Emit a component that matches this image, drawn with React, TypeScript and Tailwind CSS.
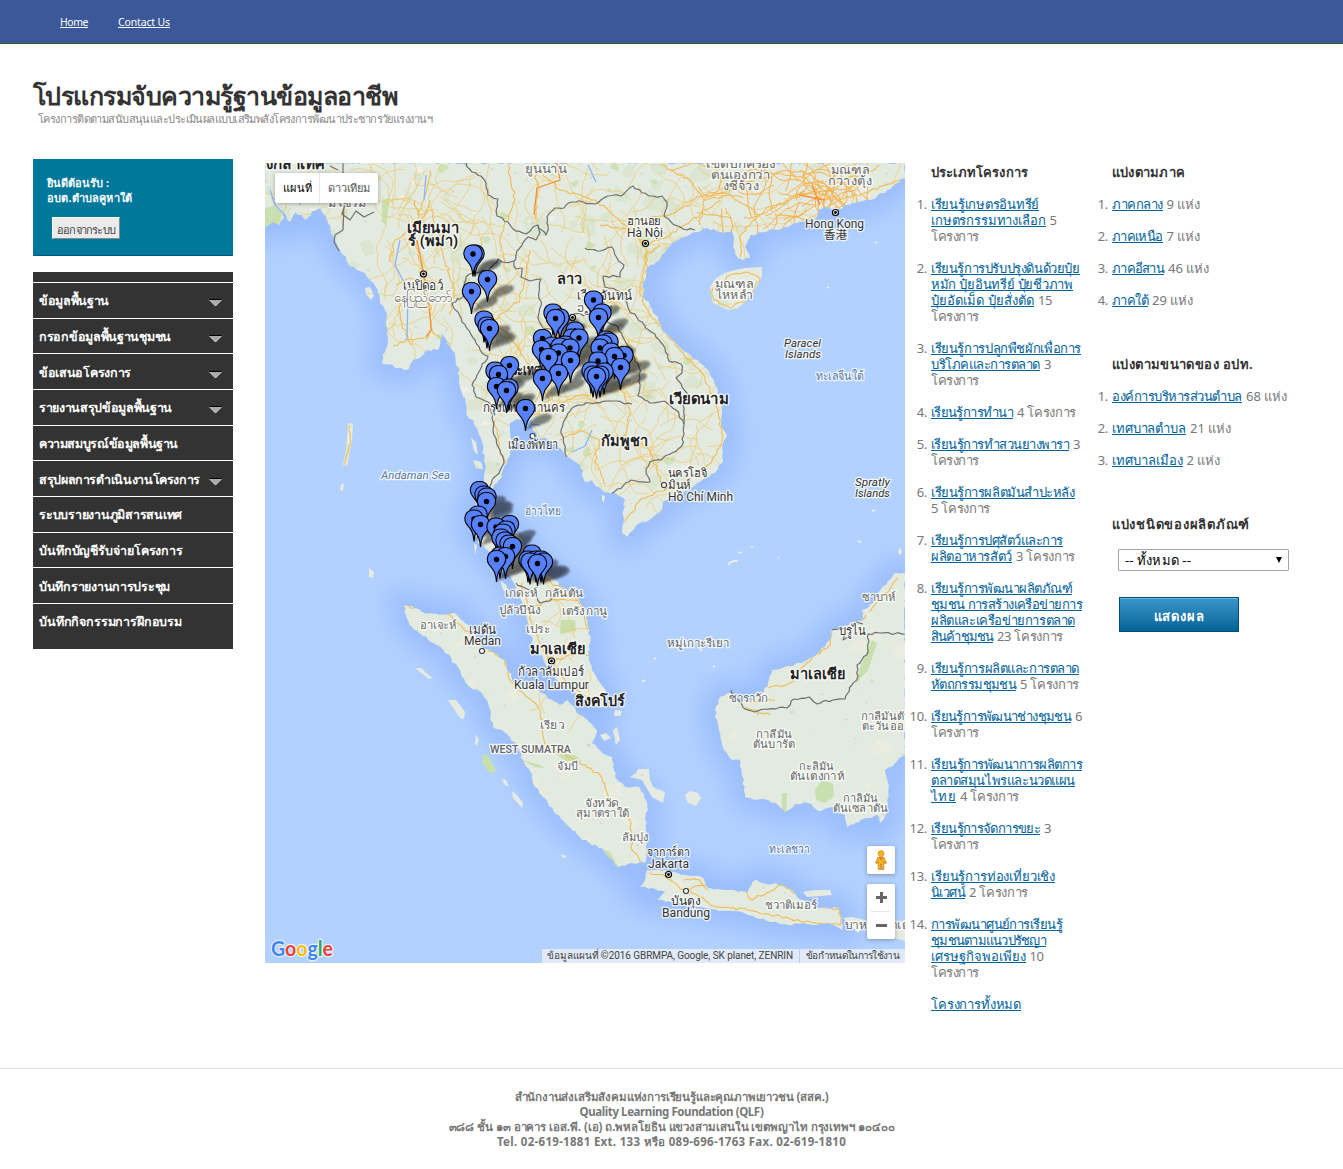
import { useLayoutEffect, useRef, useState, type ReactNode } from "react";

const FONT = "font-['Noto_Sans','DejaVu_Sans',sans-serif]";

/* Text whose letter spacing is adjusted so that it fills the given width. */
function Fit({ w, className = "", children }: { w: number; className?: string; children: ReactNode }) {
  const ref = useRef<HTMLSpanElement>(null);
  const [spacing, setSpacing] = useState(0);
  useLayoutEffect(() => {
    const el = ref.current;
    if (!el) return;
    const measure = (px: number) => {
      el.style.letterSpacing = px + "px";
      return el.getBoundingClientRect().width;
    };
    const base = measure(0);
    const slope = measure(1) - base;
    const value = slope > 0 ? (w - base) / slope : 0;
    el.style.letterSpacing = value + "px";
    setSpacing(value);
  }, [w]);
  return (
    <span ref={ref} className={"inline-block whitespace-nowrap " + className} style={{ letterSpacing: spacing }}>
      {children}
    </span>
  );
}

type Line = { a?: string; aw?: number; t?: string; tw?: number };
const K: Line = { t: "โครงการ", tw: 48 };

const projects: Line[][] = [
  [{ a: "เรียนรู้เกษตรอินทรีย์", aw: 108 }, { a: "เกษตรกรรมทางเลือก", aw: 114.5, t: "5", tw: 7 }, K],
  [
    { a: "เรียนรู้การปรับปรุงดินด้วยปุ๋ย", aw: 148.5 },
    { a: "หมัก ปุ๋ยอินทรีย์ ปุ๋ยชีวภาพ", aw: 142 },
    { a: "ปุ๋ยอัดเม็ด ปุ๋ยสั่งตัด", aw: 103, t: "15", tw: 14 },
    K,
  ],
  [{ a: "เรียนรู้การปลูกพืชผักเพื่อการ", aw: 150 }, { a: "บริโภคและการตลาด", aw: 109, t: "3", tw: 7 }, K],
  [{ a: "เรียนรู้การทำนา", aw: 82, t: "4 โครงการ", tw: 59 }],
  [{ a: "เรียนรู้การทำสวนยางพารา", aw: 138, t: "3", tw: 7 }, K],
  [{ a: "เรียนรู้การผลิตมันสำปะหลัง", aw: 143.5 }, { t: "5 โครงการ", tw: 59 }],
  [{ a: "เรียนรู้การปศุสัตว์และการ", aw: 131.5 }, { a: "ผลิตอาหารสัตว์", aw: 81, t: "3 โครงการ", tw: 59 }],
  [
    { a: "เรียนรู้การพัฒนาผลิตภัณฑ์", aw: 141 },
    { a: "ชุมชน การสร้างเครือข่ายการ", aw: 151 },
    { a: "ผลิตและเครือข่ายการตลาด", aw: 144 },
    { a: "สินค้าชุมชน", aw: 62, t: "23 โครงการ", tw: 66 },
  ],
  [{ a: "เรียนรู้การผลิตและการตลาด", aw: 148 }, { a: "หัตถกรรมชุมชน", aw: 85, t: "5 โครงการ", tw: 59 }],
  [{ a: "เรียนรู้การพัฒนาช่างชุมชน", aw: 140, t: "6", tw: 7 }, K],
  [
    { a: "เรียนรู้การพัฒนาการผลิตการ", aw: 151 },
    { a: "ตลาดสมุนไพรและนวดแผน", aw: 144 },
    { a: "ไทย", aw: 25, t: "4 โครงการ", tw: 59 },
  ],
  [{ a: "เรียนรู้การจัดการขยะ", aw: 109, t: "3", tw: 7 }, K],
  [{ a: "เรียนรู้การท่องเที่ยวเชิง", aw: 124 }, { a: "นิเวศน์", aw: 34, t: "2 โครงการ", tw: 59 }],
  [
    { a: "การพัฒนาศูนย์การเรียนรู้", aw: 131 },
    { a: "ชุมชนตามแนวปรัชญา", aw: 115 },
    { a: "เศรษฐกิจพอเพียง", aw: 94.5, t: "10", tw: 14 },
    K,
  ],
];

const regions: Line[][] = [
  [{ a: "ภาคกลาง", aw: 50.5, t: "9 แห่ง", tw: 34 }],
  [{ a: "ภาคเหนือ", aw: 50.5, t: "7 แห่ง", tw: 34 }],
  [{ a: "ภาคอีสาน", aw: 52, t: "46 แห่ง", tw: 41 }],
  [{ a: "ภาคใต้", aw: 36, t: "29 แห่ง", tw: 41 }],
];

const sizes: Line[][] = [
  [{ a: "องค์การบริหารส่วนตำบล", aw: 130, t: "68 แห่ง", tw: 41 }],
  [{ a: "เทศบาลตำบล", aw: 74, t: "21 แห่ง", tw: 41 }],
  [{ a: "เทศบาลเมือง", aw: 70.5, t: "2 แห่ง", tw: 34 }],
];

const menu: [string, number, boolean][] = [
  ["ข้อมูลพื้นฐาน", 70, true],
  ["กรอกข้อมูลพื้นฐานชุมชน", 132, true],
  ["ข้อเสนอโครงการ", 92, true],
  ["รายงานสรุปข้อมูลพื้นฐาน", 133, true],
  ["ความสมบูรณ์ข้อมูลพื้นฐาน", 139, false],
  ["สรุปผลการดำเนินงานโครงการ", 161, true],
  ["ระบบรายงานภูมิสารสนเทศ", 143, false],
  ["บันทึกบัญชีรับจ่ายโครงการ", 144, false],
  ["บันทึกรายงานการประชุม", 131, false],
  ["บันทึกกิจกรรมการฝึกอบรม", 143, false],
];

function NumberedList({ items }: { items: Line[][] }) {
  return (
    <ol className="flex flex-col gap-4">
      {items.map((lines, i) => (
        <li key={i} className="flex">
          <span className="-ml-8 w-8 pr-[4px] text-right tracking-tight">{i + 1}.</span>
          <div>
            {lines.map((l, j) => (
              <div key={j} className="flex h-4 gap-1">
                {l.a && (
                  <a href="#" className="text-[#00629a]">
                    <Fit w={l.aw!} className="h-[15px] border-b border-[#00629a]">
                      {l.a}
                    </Fit>
                  </a>
                )}
                {l.t && <Fit w={l.tw!}>{l.t}</Fit>}
              </div>
            ))}
          </div>
        </li>
      ))}
    </ol>
  );
}

function Heading({ w, children }: { w: number; children: string }) {
  return (
    <h3 className="mb-4 h-4 font-bold text-[#333]">
      <Fit w={w}>{children}</Fit>
    </h3>
  );
}

const MAINLAND =
  "M265 163V227L272 222L280 225L285 213L290 222L296 212L306 220L312 211L320 208L328 223L335 240L341 252L348 263L357 270L365 273L371 281L378 293L380 303L387 313L386 325L388 337L385 352L382 363L394 367L407 370L412 362L420 358L428 350L438 350L442 332L447 344L452 350L458 367L459 380L462 393L466 405L468 417L474 424L478 430L483 450L485 463L484 475L482 487L479 497L475 507L472 520L474 536L482 545L490 553L498 563L505 573L512 580L520 597L524 608L527 620L532 643L545 663L555 677L564 686L575 693L590 706L604 707L606 696L600 683L592 670L589 656L590 643L588 627L585 610L577 598L565 590L552 577L540 571L532 563L527 553L522 543L519 534L513 530L502 528L495 520L492 507L492 492L497 483L502 477L507 460L512 443L510 430L510 423L522 418L532 420L533 430L537 437L548 440L558 447L567 457L580 465L585 482L592 480L602 490L612 493L625 500L623 515L622 533L627 537L635 527L652 518L662 510L663 502L680 494L695 485L707 477L715 473L722 463L722 447L727 435L721 425L722 413L718 390L714 380L708 370L698 360L688 353L674 341L662 330L658 317L652 309L645 300L643 283L648 267L656 262L665 252L672 243L685 237L696 232L708 228L720 232L732 232L735 250L738 258L743 260L750 258L745 247L750 235L768 231L785 227L800 222L815 220L818 210L828 207L835 210L852 203L870 200L885 193L895 184L905 178V163Z";
const SUMATRA =
  "M404 605L412 606L422 612L440 615L455 613L465 623L473 630L482 647L492 652L505 660L509 672L515 683L528 685L542 693L552 700L560 705L567 700L580 715L592 724L597 730L592 743L602 753L612 757L615 777L625 787L640 788L646 800L648 810L645 820L647 833L645 863L632 863L618 867L610 858L602 848L592 845L580 837L565 823L556 814L548 803L541 795L533 783L532 774L523 760L518 748L510 737L502 730L493 727L487 700L482 693L470 687L462 677L456 664L445 653L437 645L428 640L412 627L406 615Z";
const JAVA =
  "M647 870L665 870L685 875L702 877L708 888L725 890L748 892L752 883L757 880L766 884L775 883L792 890L797 897L803 900L818 908L838 908L842 918L842 930L828 923L816 925L802 923L788 925L772 922L756 918L742 912L722 911L702 907L680 903L658 900L665 892L652 888L640 887L645 880Z";
const BORNEO =
  "M905 573L895 573L888 581L878 593L874 602L865 610L863 620L855 622L842 627L832 630L830 640L825 647L815 656L802 663L787 666L772 670L770 676L768 683L764 692L752 700L738 702L733 694L728 693L718 700L715 717L722 743L724 750L732 760L740 760L745 797L755 800L768 800L776 803L785 812L795 804L808 803L818 811L832 807L845 815L847 827L868 818L878 815L880 823L887 810L888 783L885 770L895 763L905 755Z";
const ISLANDS =
  "M710 287L716 278L725 273L735 270L745 268L762 267L762 277L752 293L745 302L738 308L728 310L713 303ZM630 777L636 773L638 769L649 769L650 780L653 787L665 792L663 803L652 797L642 780ZM685 795L690 791L698 793L701 798L696 806L688 803ZM803 892L815 890L830 890L832 895L807 897ZM843 918L852 917L865 920L872 925L862 928L858 933ZM885 925L905 920V941L888 936ZM348 423L353 424L352 440L347 466L343 465L346 450ZM341 484L344 484L343 491L340 490ZM369 568L374 572L373 578L369 577ZM415 668L421 668L432 678L429 679ZM448 700L456 700L465 712L464 719L460 718ZM476 734L479 740L477 746L475 744ZM502 779L506 780L509 787L504 784ZM512 791L516 794L523 803L522 808L513 798ZM561 854L566 856L566 858L562 857ZM365 288L370 287L374 296L371 300L366 294ZM600 735L606 733L611 738L604 741ZM613 730L617 727L620 740L616 745ZM615 710L622 711L620 716L614 716ZM862 610L868 608L870 614L864 615ZM899 548L902 550L901 555L898 553ZM699 646L703 650L700 652ZM602 495L605 496L604 503L602 500ZM471 438L476 442L478 455L474 451ZM473 460L481 462L483 469L476 468ZM474 543L477 546L475 555ZM500 580L506 585L509 592L503 590Z";

const BORDERS = [
  "M343 163V174L352 176M338 170L330 166M344 205L343 230L335 235L334 242L339 251M345 205L342 214L350 220L356 211L364 217L374 212",
  "M466 163L472 172L481 176L486 183L488 195L498 199L497 216L508 222L513 229L526 234L531 230L538 225L540 233L536 240L528 237L519 249L514 261L502 262L498 259L489 270L473 273L466 277L463 297L452 303L462 322L475 340L482 353L488 356L480 370L472 385L476 397L488 402L493 415L493 430L497 445L504 463L499 473L492 480L488 500L483 518",
  "M538 225L546 235L548 226L547 217L555 208L564 208L572 202L583 202L595 204L608 196L621 196L633 186L642 193L653 196L662 196L667 202L664 216L671 222L683 229L695 230",
  "M514 261L516 269L522 268L521 277L530 281L541 279L539 292L541 306L538 318L543 328L556 331L568 321L574 314L587 315L600 320L618 327L624 339L633 354L639 367L640 378L638 396L650 403L664 401L676 410L684 424L682 446L672 453L661 460L650 462L646 473L650 482L631 480L612 493",
  "M567 457L564 444L561 430L567 416L572 408L590 403L610 401L632 404",
  "M585 248L597 251L612 247L617 258L624 265L620 277L603 276L605 287L616 290L625 296L629 310L642 322L656 337L665 348L669 361L681 364L682 373L676 378L687 393L683 405L684 424",
  "M516 583L525 588L535 595L540 603L550 601L557 592",
  "M731 690L738 700L745 709L755 712L765 709L787 708L794 699L809 697L817 704L833 700L845 699L852 685L858 676L857 665L868 652L868 634L880 633L905 634M832 630L845 629L843 640L850 636M856 622L863 624",
];

const ROADS = [
  "M413 225L416 245L422 265L425 290L430 305L432 330L426 340",
  "M415 200L418 215L432 210L440 240L445 262L455 290L450 315M430 200L420 225L395 240L390 262M430 170L425 195L415 225",
  "M396 285L410 278L440 282M398 295L402 325L412 345M425 338L400 342L393 346M432 330L450 345",
  "M500 325L520 350L550 400L522 418M470 300L495 320L520 300L530 250M555 317L560 350L548 380L528 410M575 330L600 360L620 380M522 418L540 410L580 395L615 392L640 380",
  "M495 420L500 450L508 465L500 485L497 510L510 535L525 560L545 580L565 590L580 605L588 630",
  "M522 583L530 615L538 640L551 662L565 680L588 697L603 700M551 662L570 655L590 655M530 610L550 600L578 600",
  "M560 440L580 430L600 440L625 435L650 450L665 490M625 435L630 410L620 385M600 440L595 462L605 485",
  "M625 522L640 500L665 490L690 480L712 462L722 440L718 410L705 378L680 350L650 315L640 295L645 255L660 245",
  "M645 245L620 220L595 200L560 190L540 170M645 245L670 235L700 215L720 200M645 245L630 230L600 225M645 245L648 280",
  "M704 200L730 195L760 215L790 200L815 190L830 200L860 195L900 180M704 200L690 180L660 165M704 200L700 225M760 215L740 235L740 257M815 190L800 170M815 190L860 175L880 165M815 190L790 175L750 170L704 200",
  "M506 270L500 240L515 200L508 165M535 163L537 190L536 220M400 605L450 615L480 645L505 660L510 680L540 710L545 745L575 760L600 775L610 800L631 823L632 850L643 866",
  "M650 873L665 876L684 890L705 885L745 891L752 900L780 885L800 895L825 908L840 910L840 925L800 921L770 915L747 910L710 905L690 890M684 880L700 880L708 890",
  "M898 578L880 600L862 620M832 632L830 645L805 665L790 683L768 688M775 700L752 702L740 700M770 715L745 708",
  "M712 290L730 275L748 272L760 278L748 300L730 308L714 300L712 290",
  "M350 425L350 445L345 465",
];

/* Small deterministic generator for secondary roads and terrain patches. */
function rng(seed: number) {
  let s = seed;
  return () => {
    s = (s * 16807) % 2147483647;
    return s / 2147483647;
  };
}

function walks(seed: number, n: number, x: number, y: number, w: number, h: number) {
  const r = rng(seed);
  let d = "";
  for (let i = 0; i < n; i++) {
    let px = x + r() * w;
    let py = y + r() * h;
    let dir = r() * 6.28;
    d += `M${px.toFixed(1)} ${py.toFixed(1)}`;
    const steps = 6 + Math.floor(r() * 9);
    for (let k = 0; k < steps; k++) {
      dir += (r() - 0.5) * 1.1;
      px += Math.cos(dir) * 5;
      py += Math.sin(dir) * 5;
      d += `L${px.toFixed(1)} ${py.toFixed(1)}`;
    }
  }
  return d;
}

function patches(seed: number, n: number, x: number, y: number, w: number, h: number, size: number) {
  const r = rng(seed);
  let d = "";
  for (let i = 0; i < n; i++) {
    const cx = x + r() * w;
    const cy = y + r() * h;
    const m = size * (0.4 + r());
    for (let k = 0; k < 7; k++) {
      const a = (k / 7) * 6.28;
      const q = m * (0.4 + r() * 0.8);
      d += `${k ? "L" : "M"}${(cx + Math.cos(a) * q * 1.2).toFixed(1)} ${(cy + Math.sin(a) * q).toFixed(1)}`;
    }
    d += "Z";
  }
  return d;
}

/* Gives a coastline or border a finer, jagged outline. */
function jag(path: string, amount: number) {
  const r = rng(97);
  return path
    .split("M")
    .filter(Boolean)
    .map((part) => {
      const closed = part.endsWith("Z");
      const pts = part
        .replace("Z", "")
        .split("L")
        .map((p) => p.split(" ").map(Number));
      if (closed) pts.push(pts[0]);
      let d = "";
      pts.forEach(([x, y], i) => {
        if (i) {
          const [px, py] = pts[i - 1];
          const n = Math.max(1, Math.round(Math.hypot(x - px, y - py) / 3.5));
          for (let k = 1; k < n; k++) {
            const t = k / n;
            d += `L${(px + (x - px) * t + (r() - 0.5) * amount).toFixed(1)} ${(py + (y - py) * t + (r() - 0.5) * amount).toFixed(1)}`;
          }
        }
        d += `${i ? "L" : "M"}${x} ${y}`;
      });
      return d + (closed ? "Z" : "");
    })
    .join("");
}

const FRAME = "M265 163L265 227L";
const mainland = jag(MAINLAND.replace("M265 163V227L", FRAME).replace("L905 178V163Z", "L905 178L905 163Z"), 3);
const sumatra = jag(SUMATRA, 2.5);
const java = jag(JAVA, 2);
const borneo = jag(BORNEO, 2.5);
const coast = mainland + sumatra + java + borneo;

const minorRoads =
  walks(11, 75, 265, 163, 640, 70) +
  walks(5, 60, 385, 200, 150, 140) +
  walks(9, 80, 480, 290, 160, 130) +
  walks(31, 40, 560, 200, 110, 100) +
  walks(21, 26, 640, 340, 90, 140) +
  walks(77, 30, 530, 410, 140, 110) +
  walks(3, 14, 520, 590, 70, 90);

const pins: [number, number][] = [
  [475, 254], [473, 254], [487.5, 279.5], [471.5, 291.5], [593.5, 300], [553, 313], [602, 313], [560, 318], [598.5, 317.5],
  [555.5, 318.5], [484, 320], [487, 326], [489.5, 328.5], [575, 331], [572, 338], [579, 338], [542.5, 338.5], [606, 340],
  [609, 342], [603, 344], [565, 345], [552, 346], [560, 347], [600, 348], [570, 348], [541.5, 349.5], [611, 352], [558.5, 353],
  [624, 355.5], [614.5, 356.5], [548.5, 357.5], [570.5, 360.5], [598, 361], [509.5, 365.5], [620.5, 367.5], [591, 371],
  [495, 371], [604, 372], [558.5, 373.5], [498.5, 374.5], [600, 375], [593, 375], [596.5, 376.5], [542.5, 378.5],
  [496.5, 386.5], [509, 388], [506.5, 390.5], [525.5, 408.5], [479.5, 490.5], [484, 495], [487, 497], [486.5, 501.5],
  [478, 515], [474, 519], [509.5, 524.5], [480.5, 524.5], [496, 527], [506, 530], [503, 533], [501, 538], [505, 541],
  [509, 544], [512.5, 546.5], [532, 554], [500, 556], [505.5, 556.5], [496.5, 559.5], [528, 560], [536, 560], [541, 560],
  [543.5, 562], [530, 562], [537.5, 563.5],
];

/* x, baseline y, width, size, kind, text */
type Kind = "country" | "city" | "region" | "sea" | "seaLatin" | "island";
const labels: [number, number, number, number, Kind, string][] = [
  [256, 169, 69, 15, "country", "บังกลาเทศ"],
  [328, 207, 38, 12, "region", "มิโซรัม"],
  [407, 233, 52, 14.5, "country", "เมียนมา"],
  [408, 246, 50, 14.5, "country", "ร์ (พม่า)"],
  [403, 290, 40, 13, "city", "เนปิดอว์"],
  [394, 302, 57, 12, "region", "နေပြည်တော်"],
  [525, 173, 42, 12, "region", "ยูนนาน"],
  [557, 284, 25, 14.5, "country", "ลาว"],
  [577, 300, 55, 13, "city", "เวียงจันทน์"],
  [577, 312, 35, 12, "region", "ວຽງຈັນ"],
  [627, 225, 34, 12, "city", "ฮานอย"],
  [627, 237, 36, 12.5, "city", "Hà Nội"],
  [706, 168, 70, 12, "region", "เขตปกครอง"],
  [711, 179, 60, 12, "region", "ตนเองกว่า"],
  [723, 190, 36, 12, "region", "งซีจ้วง"],
  [831, 174, 38, 12, "region", "มณฑล"],
  [828, 185, 44, 12, "region", "กวางตุ้ง"],
  [805, 228, 59, 12.5, "city", "Hong Kong"],
  [824, 239, 23, 11.5, "city", "香港"],
  [715, 288, 38, 12, "region", "มณฑล"],
  [716, 299, 37, 12, "region", "ไหหลำ"],
  [784, 347, 37, 11.5, "island", "Paracel"],
  [785, 358, 36, 11.5, "island", "Islands"],
  [816, 380, 48, 12, "sea", "ทะเลจีนใต้"],
  [505, 375, 54, 14.5, "country", "ประเทศไทย"],
  [483, 412, 82, 13, "city", "กรุงเทพมหานคร"],
  [508, 449, 50, 13, "city", "เมืองพัทยา"],
  [669, 404, 60, 14.5, "country", "เวียดนาม"],
  [601, 446, 47, 14.5, "country", "กัมพูชา"],
  [668, 477, 39, 12, "city", "นครโฮจิ"],
  [668, 489, 23, 12, "city", "มินห์"],
  [668, 501, 65, 12.5, "city", "Hồ Chí Minh"],
  [381, 479, 69, 11.5, "seaLatin", "Andaman Sea"],
  [525, 515, 36, 12, "sea", "อ่าวไทย"],
  [855, 486, 35, 11.5, "island", "Spratly"],
  [855, 497, 35, 11.5, "island", "Islands"],
  [505, 597, 33, 11.5, "region", "เกดะห์"],
  [545, 597, 38, 11.5, "region", "กลันตัน"],
  [499, 614, 42, 11.5, "region", "ปูลัวปีนัง"],
  [562, 615, 45, 11.5, "region", "เตรังกานู"],
  [420, 629, 37, 11.5, "region", "อาเจะห์"],
  [526, 633, 24, 11.5, "region", "เประ"],
  [469, 634, 27, 13, "city", "เมดัน"],
  [464, 645, 37, 12.5, "city", "Medan"],
  [530, 654, 55, 14.5, "country", "มาเลเซีย"],
  [518, 676, 66, 13, "city", "กัวลาลัมเปอร์"],
  [514, 689, 75, 12.5, "city", "Kuala Lumpur"],
  [575, 706, 50, 14.5, "country", "สิงคโปร์"],
  [540, 729, 24, 11.5, "region", "เรียว"],
  [490, 753, 81, 10.5, "region", "WEST SUMATRA"],
  [557, 770, 21, 11.5, "region", "จัมบี"],
  [585, 807, 34, 11, "region", "จังหวัด"],
  [576, 817, 53, 11, "region", "สุมาตราใต้"],
  [622, 841, 27, 11.5, "region", "ลัมปุง"],
  [647, 856, 43, 12.5, "city", "จาการ์ตา"],
  [648, 868, 41, 12.5, "city", "Jakarta"],
  [671, 905, 30, 12.5, "city", "บันดุง"],
  [662, 917, 48, 12.5, "city", "Bandung"],
  [765, 909, 52, 11.5, "region", "ชวาติเมอร์"],
  [845, 929, 64, 11.5, "region", "บาหลีนูซาเต"],
  [769, 853, 41, 12, "sea", "ทะเลชวา"],
  [667, 647, 62, 11.5, "region", "หมู่เกาะรีเยา"],
  [862, 601, 34, 11.5, "region", "ซาบาห์"],
  [839, 635, 27, 13, "city", "บรูไน"],
  [790, 679, 55, 14.5, "country", "มาเลเซีย"],
  [729, 702, 39, 11.5, "region", "ซาราวัก"],
  [861, 720, 51, 11, "region", "กาลีมันตัน"],
  [862, 730, 49, 11, "region", "ตะวันออก"],
  [756, 738, 36, 11, "region", "กาลีมัน"],
  [753, 748, 42, 11, "region", "ตันบารัต"],
  [799, 770, 35, 11, "region", "กะลิมัน"],
  [790, 780, 54, 11, "region", "ตันเตงกาห์"],
  [843, 802, 35, 11, "region", "กาลิมัน"],
  [833, 812, 55, 11, "region", "ตันเซลาตัน"],
];

const labelClass: Record<Kind, string> = {
  country: "fill-[#222] font-bold",
  city: "fill-[#333]",
  region: "fill-[#666] font-medium",
  sea: "fill-[#5579a8]",
  seaLatin: "fill-[#5579a8] italic",
  island: "fill-[#333] italic",
};

function MapCanvas() {
  return (
    <svg viewBox="265 163 640 800" className="block h-[800px] w-[640px] bg-[#b2d1ff] font-['Roboto','Noto_Sans','Noto_Sans_CJK_SC',sans-serif]">
      <defs>
        <filter id="deep" x="-10%" y="-10%" width="120%" height="120%">
          <feGaussianBlur stdDeviation="12" />
        </filter>
        <filter id="soft" x="-40%" y="-40%" width="180%" height="180%">
          <feGaussianBlur stdDeviation="1.2" />
        </filter>
        <clipPath id="landClip">
          <path d={coast + ISLANDS} />
        </clipPath>
        <g id="pin">
          <path
            d="M0 22.5C-.7 13.5-2.6 10.6-6 6.8C-11.8 .6-9.2-9 0-9S11.8 .6 6 6.8C2.6 10.6 .7 13.5 0 22.5Z"
            className="fill-[#5781fc] stroke-black"
            strokeWidth="1.1"
          />
          <circle r="2.7" />
        </g>
      </defs>
      <g filter="url(#deep)" className="fill-none stroke-[#8bb0fb]" strokeWidth="26" opacity=".65">
        <path d={MAINLAND + SUMATRA + JAVA + BORNEO} />
      </g>
      <path d={coast} className="fill-[#e3eadf]" />
      <path d={ISLANDS} className="fill-[#e6ebe1]" />
      <g clipPath="url(#landClip)">
        <path d={patches(8, 150, 265, 163, 640, 350, 9)} className="fill-[#dae5d2]" />
        <path d={patches(41, 60, 400, 590, 505, 340, 8)} className="fill-[#e9ecdf]" />
        <path d={patches(17, 110, 265, 163, 640, 350, 4)} className="fill-[#efeee8]" />
        <path d={patches(19, 60, 440, 163, 300, 350, 4)} className="fill-[#c8dfae]" opacity=".8" />
        <path d={patches(67, 420, 265, 163, 640, 780, 1.3)} className="fill-[#ced6ca]" opacity=".8" />
        <path
          d="M265 208L274 206L281 212L280 226H265ZM382 200L390 198L386 225L382 222ZM815 790L822 780L833 784L834 796L825 803L816 800ZM782 793L787 793L786 813L782 812ZM600 848L610 852L619 868L612 868ZM872 640L877 643L868 670L855 685L860 668ZM522 760L540 765L545 768L535 767ZM555 753L575 755L582 762L565 761ZM561 620L575 620L576 631L560 634Z"
          className="fill-[#c8dfae]"
        />
        <path d={minorRoads} className="fill-none stroke-[#efc96f]" strokeWidth=".9" opacity=".75" />
        <path d={walks(51, 34, 690, 163, 200, 60) + walks(52, 25, 800, 172, 35, 35)} className="fill-none stroke-[#f6b14d]" strokeWidth="1" />
        {ROADS.map((d, i) => (
          <path key={i} d={jag(d, 3)} className="fill-none stroke-[#f0bd55]" strokeWidth="1.1" />
        ))}
        <path d="M417 240L424 275L430 315L431 330L426 337M557 163L560 180L537 188L534 215M799 195L825 200M812 185L820 205" className="fill-none stroke-[#f5923a]" strokeWidth="1.3" />
        <path d="M270 190L275 205L285 215M297 180L300 205M426 175L424 200M400 240L395 265L408 290L407 340M588 165L596 182M540 425L525 424M572 452L585 446L592 430" className="fill-none stroke-[#8bb5fb]" strokeWidth="1.3" />
      </g>
      <path d="M482 755L488 755L494 766L496 772L490 773L483 765Z" className="fill-[#c8dfae]" />
      <g className="fill-none stroke-[#707070]" strokeWidth="1.2" strokeLinejoin="round">
        {BORDERS.map((d, i) => (
          <path key={i} d={i === 0 ? d : jag(d, 2.4)} />
        ))}
      </g>
      <path d="M728 565Q731 560 738 561M739 553L742 552M751 547L753 547M778 557L779 558M858 541L861 542M827 288L829 287M875 243L877 242M872 511L875 510M642 682L645 680M654 659L656 658M713 667L715 666" className="fill-none stroke-[#eef0ea]" strokeWidth="1.6" />
      {[[423.5, 274], [645.5, 243.5], [835.5, 212.5], [572.5, 317.5], [551.5, 661], [668.5, 874.5]].map(([x, y]) => (
        <g key={x}>
          <circle cx={x} cy={y} r="3" className="fill-white stroke-black" strokeWidth="1.2" />
          <circle cx={x} cy={y} r="1.4" />
        </g>
      ))}
      {[[664, 485], [532.5, 436], [482, 651], [686, 891]].map(([x, y]) => (
        <circle key={x} cx={x} cy={y} r="2.5" className="fill-white stroke-[#333]" strokeWidth="1.1" />
      ))}
      {labels.map(([x, y, w, size, kind, text], i) => (
        <text
          key={i}
          x={x}
          y={y}
          fontSize={size}
          textLength={w}
          lengthAdjust="spacingAndGlyphs"
          paintOrder="stroke"
          strokeWidth="2.6"
          strokeLinejoin="round"
          className={"stroke-white/80 " + labelClass[kind]}
        >
          {text}
        </text>
      ))}
      <g filter="url(#soft)" opacity=".6">
        {pins.map(([x, y], i) => (
          <path key={i} fillOpacity=".75" d={`M${x} ${y + 22}C${x + 5} ${y + 15} ${x + 6} ${y + 9} ${x + 15} ${y + 6.5}S${x + 30} ${y + 7} ${x + 24} ${y + 12}S${x + 8} ${y + 17} ${x} ${y + 22}Z`} />
        ))}
      </g>
      {pins.map(([x, y], i) => (
        <use key={i} href="#pin" x={x} y={y} />
      ))}
    </svg>
  );
}

function GoogleLogo() {
  return (
    <svg viewBox="0 0 68 30" className="h-[30px] w-[68px] font-['Lato',sans-serif]">
      <text
        x="3"
        y="20"
        fontSize="20"
        textLength="62"
        lengthAdjust="spacingAndGlyphs"
        paintOrder="stroke"
        strokeWidth="2.5"
        strokeLinejoin="round"
        className="stroke-white/70 font-bold"
      >
        <tspan className="fill-[#4285f4]">G</tspan>
        <tspan className="fill-[#ea4335]">o</tspan>
        <tspan className="fill-[#fbbc05]">o</tspan>
        <tspan className="fill-[#4285f4]">g</tspan>
        <tspan className="fill-[#34a853]">l</tspan>
        <tspan className="fill-[#ea4335]">e</tspan>
      </text>
    </svg>
  );
}

function MapPanel() {
  return (
    <div className="relative mt-[4px] ml-8 h-[800px] w-[640px] shrink-0 overflow-hidden">
      <MapCanvas />
      <div className="absolute top-[10px] left-[10px] flex h-[30px] w-[103px] items-center rounded-[2px] bg-white text-[11px] shadow-[0_1px_4px_rgba(0,0,0,0.3)]">
        <div className="flex h-full w-[45px] items-center border-r border-[#e6e6e6] pl-2 font-medium text-black">
          <Fit w={29}>แผนที่</Fit>
        </div>
        <div className="pl-2 text-[#565656]">
          <Fit w={42}>ดาวเทียม</Fit>
        </div>
      </div>
      <div className="absolute right-[10px] bottom-[89px] flex size-7 items-center justify-center rounded-[2px] bg-white shadow-[0_1px_4px_rgba(0,0,0,0.3)]">
        <svg viewBox="0 0 12 20" className="h-5 w-3">
          <path d="M3 7.2H9L11.4 13L10 13.7L8.8 11.6V19.4H6.4V14H5.6V19.4H3.2V11.6L2 13.7L.6 13Z" fill="#fbb41b" stroke="#b8792d" strokeWidth=".7" />
          <path d="M3.6 7.4H8.4L6 10.2Z" fill="#e5771e" />
          <circle cx="6" cy="3.6" r="3" fill="#fbb41b" stroke="#c98a1c" strokeWidth=".6" />
        </svg>
      </div>
      <div className="absolute right-[10px] bottom-[24px] flex h-[55px] w-7 flex-col items-center rounded-[2px] bg-white shadow-[0_1px_4px_rgba(0,0,0,0.3)]">
        <svg viewBox="0 0 28 55" className="h-[55px] w-7">
          <path d="M9 13.5H20M14.5 8V19M9 41.5H20" stroke="#666" strokeWidth="3" />
          <path d="M4 27.5H23" stroke="#e6e6e6" />
        </svg>
      </div>
      <div className="absolute bottom-[-3px] left-[3px]">
        <GoogleLogo />
      </div>
      <div className="absolute right-0 bottom-0 flex h-[14px] w-[363px] items-center bg-[#f5f5f5]/70 pl-[5px] font-['Roboto','Noto_Sans',sans-serif] text-[10px] leading-[14px] text-[#444]">
        <Fit w={246}>ข้อมูลแผนที่ ©2016 GBRMPA, Google, SK planet, ZENRIN</Fit>
        <span className="mx-[6px] h-full w-px bg-[#b2d1ff]" />
        <Fit w={93}>ข้อกำหนดในการใช้งาน</Fit>
      </div>
    </div>
  );
}

export default function App() {
  return (
    <div className={"flex h-[1169px] w-[1343px] flex-col overflow-hidden bg-white text-[13px] leading-4 text-[#777] " + FONT}>
      <nav className="flex h-11 shrink-0 items-center gap-[30px] border-b border-[#2f5b2a] bg-[#3b5998] pl-[60px] text-[10.5px] text-white">
        <a href="#">
          <Fit w={28} className="h-[13px] border-b border-white leading-[14px]">Home</Fit>
        </a>
        <a href="#">
          <Fit w={52} className="h-[13px] border-b border-white leading-[14px]">Contact Us</Fit>
        </a>
      </nav>
      <header className="h-[115px] shrink-0 pt-[35px] pl-[33px]">
        <h1 className="h-8 text-[25px] leading-8 font-bold text-[#333]">
          <Fit w={364}>โปรแกรมจับความรู้ฐานข้อมูลอาชีพ</Fit>
        </h1>
        <p className="h-4 pl-[5px] text-[11px] text-[#888]">
          <Fit w={394}>โครงการติดตามสนับสนุนและประเมินผลแบบเสริมพลังโครงการพัฒนาประชากรวัยแรงงานฯ</Fit>
        </p>
      </header>
      <main className="flex h-[909px] shrink-0 pl-[33px]">
        <aside className="flex w-[200px] shrink-0 flex-col gap-4">
          <section className="h-[97px] border-b border-[#00557a] bg-[#00789c] pt-4 pl-[14px] text-[11px] leading-[15px] font-bold text-white">
            <div><Fit w={62}>ยินดีต้อนรับ :</Fit></div>
            <div><Fit w={85}>อบต.ตำบลคูหาใต้</Fit></div>
            <button className="mt-[12px] ml-[5px] flex h-[22px] w-[68px] items-center justify-center border border-t-white border-r-[#888] border-b-[#888] border-l-white bg-[#ebebeb] pt-[2px] font-normal text-[#444]">
              <Fit w={58}>ออกจากระบบ</Fit>
            </button>
          </section>
          <ul className="h-[377px] bg-[#333] pt-[10px] font-bold text-white">
            {menu.map(([text, w, sub]) => (
              <li key={text} className="flex h-[35.67px] items-center justify-between border-t border-white pt-[2px] pr-[10px] pl-[6px] text-[12.5px]">
                <Fit w={w}>{text}</Fit>
                {sub && (
                  <svg viewBox="0 0 15 8" className="mt-1 h-2 w-[15px]">
                    <path d="M1 .5H14L7.5 7Z" fill="#aaa" stroke="#eee" strokeWidth=".8" />
                    <path d="M1 .5H14" stroke="#000" />
                  </svg>
                )}
              </li>
            ))}
          </ul>
        </aside>
        <MapPanel />
        <section className="mt-[5px] ml-[26px] w-[181px] shrink-0">
          <Heading w={97}>ประเภทโครงการ</Heading>
          <NumberedList items={projects} />
          <a href="#" className="mt-4 block text-[#00629a]">
            <Fit w={90} className="h-[15px] border-b border-[#00629a]">โครงการทั้งหมด</Fit>
          </a>
        </section>
        <section className="mt-[5px]">
          <Heading w={73}>แบ่งตามภาค</Heading>
          <NumberedList items={regions} />
          <div className="h-12" />
          <Heading w={141}>แบ่งตามขนาดของ อปท.</Heading>
          <NumberedList items={sizes} />
          <div className="h-12" />
          <Heading w={138}>แบ่งชนิดของผลิตภัณฑ์</Heading>
          <div className="mt-[17px] ml-[6px] flex h-[22px] w-[171px] items-center justify-between rounded-[1px] border border-[#a6a6a6] pr-[6px] pl-[6px] text-black">
            <Fit w={66}>-- ทั้งหมด --</Fit>
            <svg viewBox="0 0 6 6" className="size-[6px]">
              <path d="M0 0H6L3 6Z" />
            </svg>
          </div>
          <button className="mt-[26px] ml-[7px] flex h-[35px] w-[120px] items-center justify-center border border-[#004d73] bg-linear-to-b from-[#3a96cc] to-[#006496] pt-[2px] font-bold text-white shadow-[inset_0_1px_0_#6fb6de]">
            <Fit w={51}>แสดงผล</Fit>
          </button>
        </section>
      </main>
      <footer className="flex flex-col items-center border-t border-[#e2e2e2] pt-[20px] text-[11.5px] leading-[15px] font-bold text-[#777]">
        <Fit w={314}>สำนักงานส่งเสริมสังคมแห่งการเรียนรู้และคุณภาพเยาวชน (สสค.)</Fit>
        <Fit w={184}>Quality Learning Foundation (QLF)</Fit>
        <Fit w={446}>๓๘๘ ชั้น ๑๓ อาคาร เอส.พี. (เอ) ถ.พหลโยธิน แขวงสามเสนใน เขตพญาไท กรุงเทพฯ ๑๐๔๐๐</Fit>
        <Fit w={349}>Tel. 02-619-1881 Ext. 133 หรือ 089-696-1763 Fax. 02-619-1810</Fit>
      </footer>
    </div>
  );
}
